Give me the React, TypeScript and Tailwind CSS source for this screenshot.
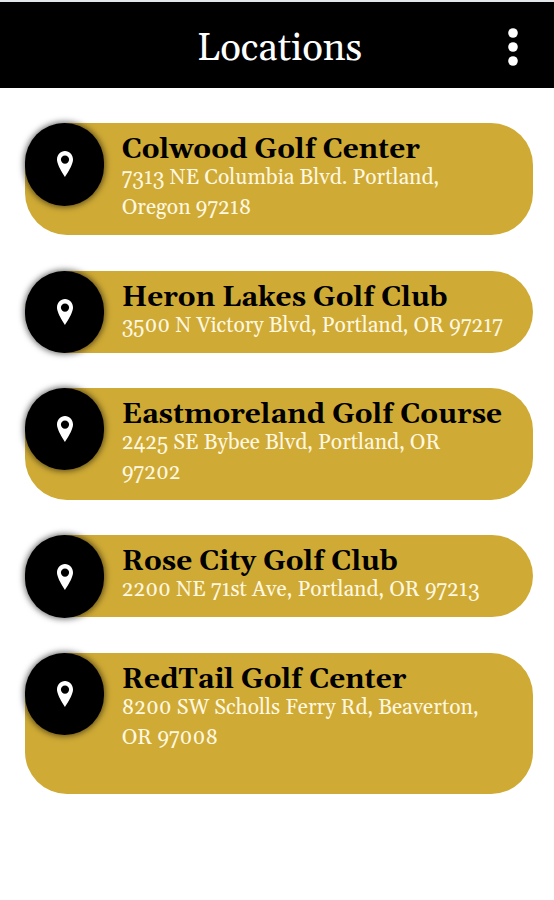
import clsx from "clsx";

interface Location {
  name: string;
  address: string[];
  height: string;
}

const locations: Location[] = [
  {
    name: "Colwood Golf Center",
    address: ["7313 NE Columbia Blvd. Portland,", "Oregon 97218"],
    height: "h-[112px]",
  },
  {
    name: "Heron Lakes Golf Club",
    address: ["3500 N Victory Blvd, Portland, OR 97217"],
    height: "h-[82px]",
  },
  {
    name: "Eastmoreland Golf Course",
    address: ["2425 SE Bybee Blvd, Portland, OR", "97202"],
    height: "h-[112px]",
  },
  {
    name: "Rose City Golf Club",
    address: ["2200 NE 71st Ave, Portland, OR 97213"],
    height: "h-[82px]",
  },
  {
    name: "RedTail Golf Center",
    address: ["8200 SW Scholls Ferry Rd, Beaverton,", "OR 97008"],
    height: "h-[141.5px]",
  },
];

function PinIcon() {
  return (
    <svg viewBox="0 0 16 26" className="h-[26px] w-4" fill="white">
      <path
        fillRule="evenodd"
        d="M8 0C3.5 0 0 3.6 0 8.6C0 14.6 8 26 8 26S16 14.6 16 8.6C16 3.6 12.5 0 8 0ZM8 4.4A4.1 4.2 0 1 1 8 12.8A4.1 4.2 0 1 1 8 4.4Z"
      />
    </svg>
  );
}

function LocationCard({ location }: { location: Location }) {
  return (
    <li className={clsx("flex items-start gap-[17.5px] rounded-[42px] bg-[#cfaa35]", location.height)}>
      <div className="flex h-[82.4px] w-[79.2px] shrink-0 items-center justify-center rounded-full bg-black shadow-[0_0_6px_1px_rgba(0,0,0,0.6)]">
        <PinIcon />
      </div>
      <div className="pt-[15px] whitespace-nowrap">
        <h2 className="text-[28px] leading-[25px] font-bold text-black">{location.name}</h2>
        <p className="text-[21.03px] leading-[30px] text-[#fff8e0]">
          {location.address.map((line) => (
            <span key={line} className="block">
              {line}
            </span>
          ))}
        </p>
      </div>
    </li>
  );
}

export default function App() {
  return (
    <div className="h-[900px] w-[554px] overflow-hidden bg-white font-[Georgia,Gelasio,'Liberation_Serif',serif]">
      <header className="flex h-22 items-center justify-between border-t-2 border-[#e3e6e8] bg-black pr-[36px] pl-[197px]">
        <h1 className="pt-2 text-[38.4px] leading-none whitespace-nowrap text-white">Locations</h1>
        <svg viewBox="0 0 10 38" className="mt-[3px] h-[38px] w-[10px]" fill="white">
          <circle cx="5" cy="5" r="4.8" />
          <circle cx="5" cy="19" r="4.8" />
          <circle cx="5" cy="33" r="4.8" />
        </svg>
      </header>
      <ul className="flex flex-col gap-[35.4px] pt-[35.2px] pr-[21px] pl-[25px]">
        {locations.map((location) => (
          <LocationCard key={location.name} location={location} />
        ))}
      </ul>
    </div>
  );
}
